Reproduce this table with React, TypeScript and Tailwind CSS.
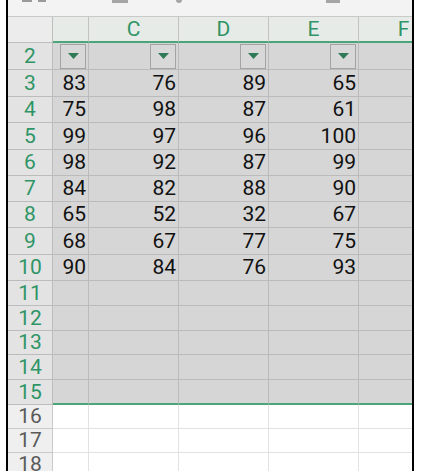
const COLS = [
  { key: "B", w: 36 },
  { key: "C", w: 90 },
  { key: "D", w: 90 },
  { key: "E", w: 90 },
  { key: "F", w: 90 },
];

const DATA: Record<number, (number | null)[]> = {
  3: [83, 76, 89, 65],
  4: [75, 98, 87, 61],
  5: [99, 97, 96, 100],
  6: [98, 92, 87, 99],
  7: [84, 82, 88, 90],
  8: [65, 52, 32, 67],
  9: [68, 67, 77, 75],
  10: [90, 84, 76, 93],
};

// row number -> height
const ROWS: [number, number][] = [
  [2, 27],
  [3, 27], [4, 26], [5, 27], [6, 26], [7, 26], [8, 26], [9, 27], [10, 26],
  [11, 25], [12, 25], [13, 24], [14, 25], [15, 25],
  [16, 24], [17, 24], [18, 24],
];

function Caret() {
  return (
    <div className="flex h-[25px] w-[26px] items-center justify-center border border-[#a3a3a3] bg-[#d8d8d8]">
      <svg width="11" height="6" viewBox="0 0 11 6">
        <path d="M0 0 H11 L5.5 6 Z" fill="#2f7a56" />
      </svg>
    </div>
  );
}

export default function App() {
  return (
    <div className="flex h-[471px] w-[422px] overflow-hidden bg-white" style={{ fontFamily: "Roboto, 'Liberation Sans', sans-serif" }}>
      <div className="ml-[6px] flex h-full w-[408px] flex-col overflow-hidden border-x-2 border-black bg-white">
        {/* toolbar remnant */}
        <div className="relative h-[17px] shrink-0 border-b border-[#c9c9c9] bg-[#f3f3f3]">
          <div className="absolute left-[14px] top-0 h-[2px] w-[10px] bg-[#9a9a9a]" />
          <div className="absolute left-[30px] top-0 h-[2px] w-[8px] bg-[#9a9a9a]" />
          <div className="absolute left-[104px] top-0 h-[3px] w-[16px] bg-[#a5a5a5]" />
          <div className="absolute left-[168px] top-0 h-[3px] w-[6px] rounded-b bg-[#a5a5a5]" />
          <div className="absolute left-[318px] top-0 h-[3px] w-[14px] bg-[#a5a5a5]" />
        </div>

        {/* column header */}
        <div className="flex h-[26px] shrink-0">
          <div className="w-[45px] shrink-0 border-b border-r border-[#bdbdbd] bg-[#ececec]" />
          {COLS.map((c) => (
            <div
              key={c.key}
              style={{ width: c.w }}
              className="flex shrink-0 items-center justify-center border-b-2 border-r border-b-[#4aa57a] border-r-[#c2c2c2] bg-[#e7ebe8] text-[21px] leading-none text-[#2f9566]"
            >
              {c.key === "B" ? "" : c.key}
            </div>
          ))}
        </div>

        {ROWS.map(([r, h]) => {
          const sel = r <= 15;
          const vals = DATA[r];
          return (
            <div key={r} className="flex shrink-0" style={{ height: h }}>
              <div
                className={`flex w-[45px] shrink-0 items-center justify-center border-r border-b text-[21px] leading-none ${
                  sel ? "border-[#bcbcbc] bg-[#e3e3e3] text-[#2f9566]" : "border-[#c9c9c9] bg-[#efefef] text-[#5a5a5a]"
                }`}
              >
                {r}
              </div>
              {COLS.map((c, i) => (
                <div
                  key={c.key}
                  style={{ width: c.w }}
                  className={`flex shrink-0 items-center justify-end pr-[2px] text-[21px] leading-none text-[#111111] ${
                    sel ? "border-r border-b border-[#bbbbbb] bg-[#d6d6d6]" : "border-r border-b border-[#e2e2e2] bg-white"
                  } ${r === 15 ? "border-b-2 border-b-[#4aa57a]" : ""} ${r === 2 ? "pr-0" : ""}`}
                >
                  {r === 2 && i < 4 ? <Caret /> : vals && vals[i] != null ? vals[i] : ""}
                </div>
              ))}
            </div>
          );
        })}
      </div>
    </div>
  );
}
